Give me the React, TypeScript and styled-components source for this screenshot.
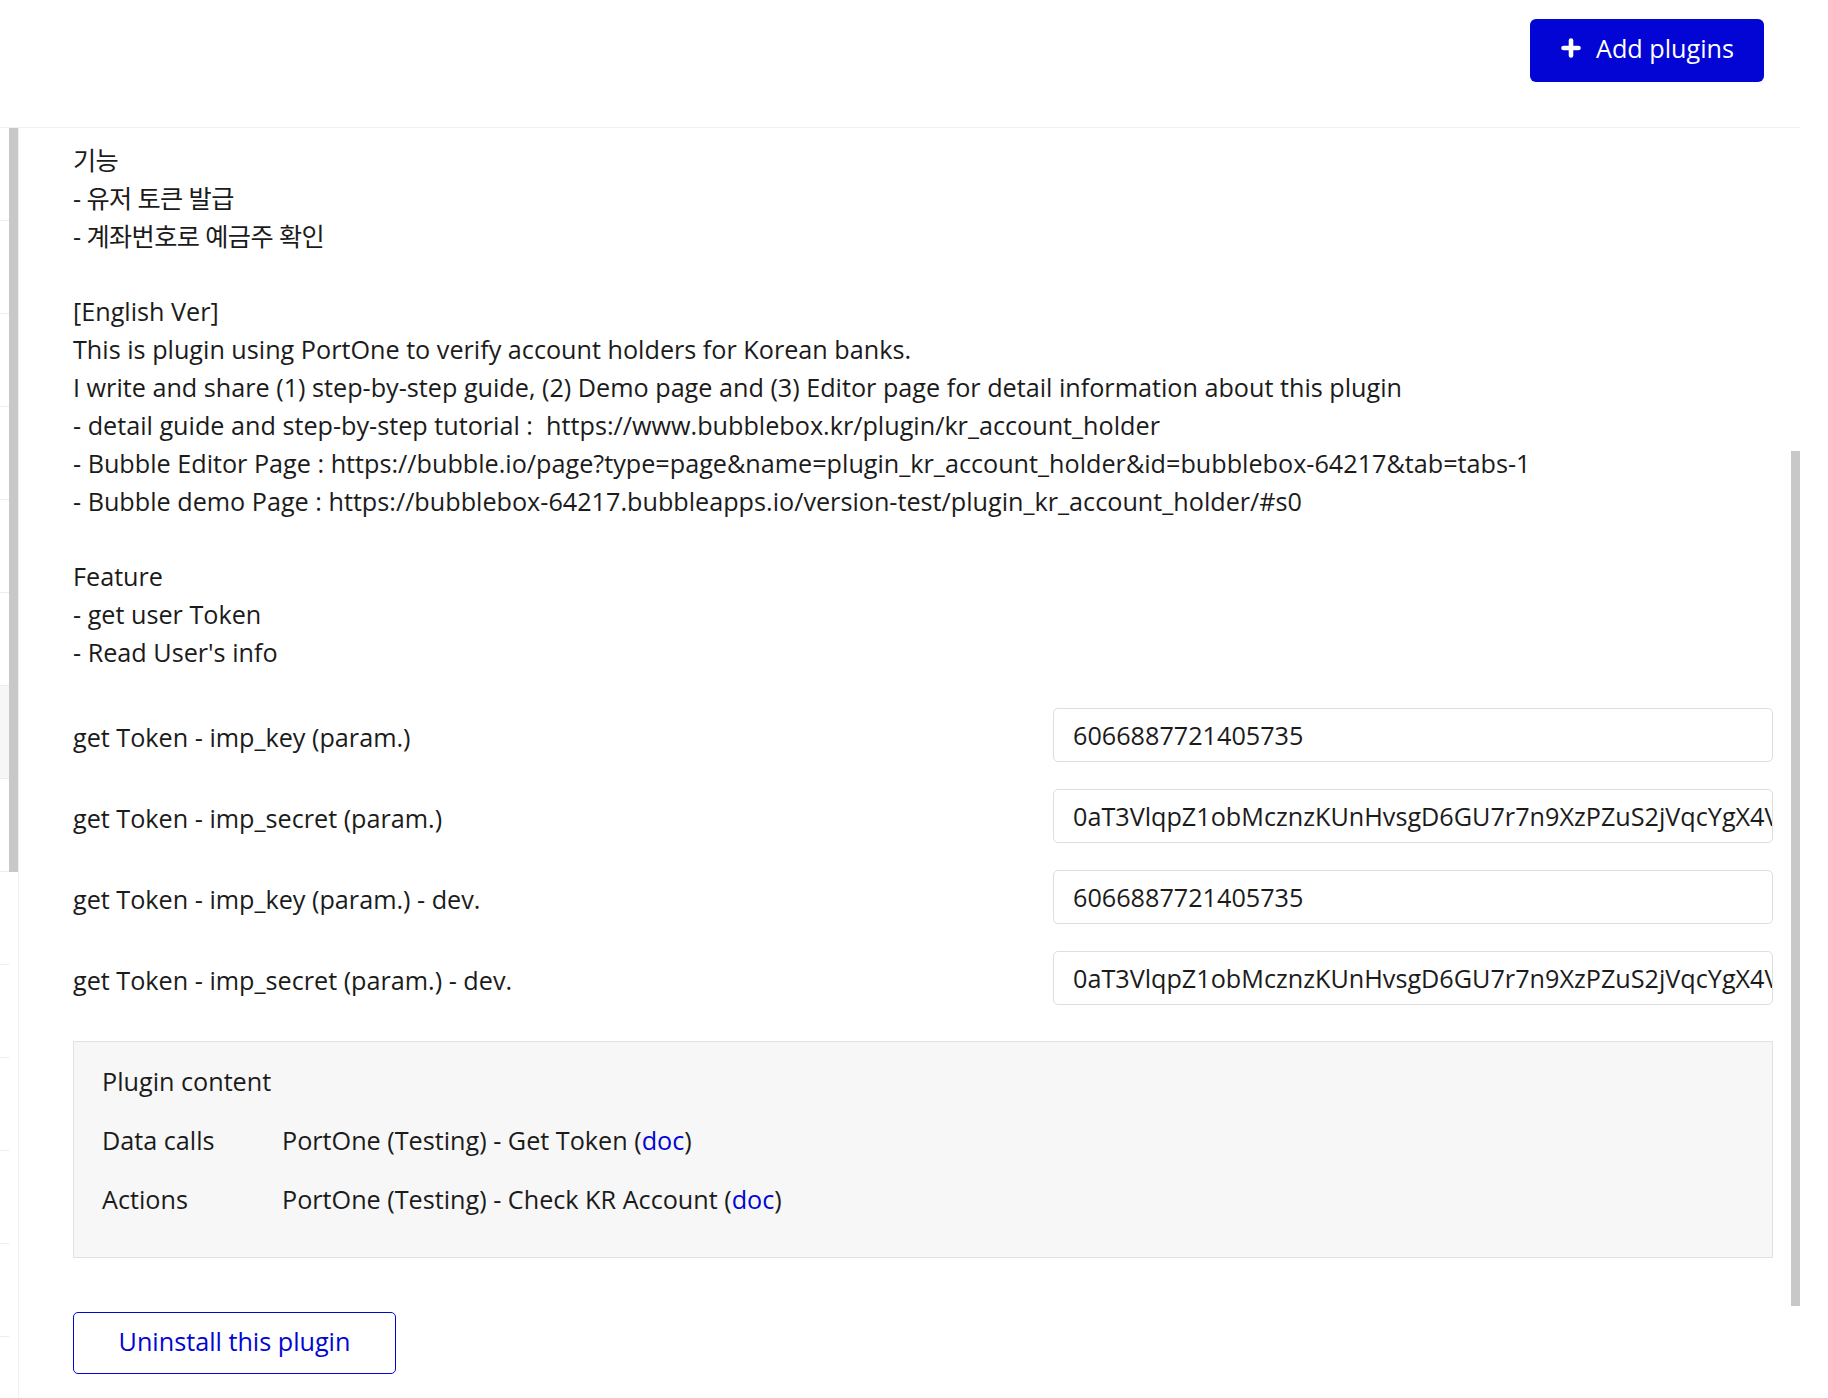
import React from 'react';
import styled, { createGlobalStyle } from 'styled-components';

const GlobalStyle = createGlobalStyle`
  html, body {
    margin: 0;
    padding: 0;
    background: #ffffff;
  }
  body {
    font-family: "Open Sans", "Noto Sans CJK KR", sans-serif;
    color: #1b1b1b;
  }
  * {
    box-sizing: border-box;
  }
`;

const BLUE = '#0205d3';

const Page = styled.div`
  width: 1828px;
  height: 1398px;
  display: flex;
  flex-direction: column;
  overflow: hidden;
  background: #fff;
`;

const Header = styled.header`
  width: 1800px;
  height: 128px;
  flex-shrink: 0;
  display: flex;
  justify-content: flex-end;
  align-items: flex-start;
  padding: 19px 36px 0 0;
  border-bottom: 1px solid #efefef;
`;

const AddButton = styled.button`
  display: flex;
  align-items: center;
  gap: 15px;
  height: 63px;
  width: 234px;
  padding: 0 0 5px 31px;
  border: none;
  border-radius: 6px;
  background: ${BLUE};
  color: #fff;
  font-family: "Open Sans", sans-serif;
  font-size: 25.2px;
  cursor: pointer;
`;

const Body = styled.div`
  flex: 1;
  display: flex;
  min-height: 0;
`;

const ListEdge = styled.div`
  width: 9px;
  display: flex;
  flex-direction: column;
`;

const ListRow = styled.div<{ $active?: boolean }>`
  height: 93px;
  flex-shrink: 0;
  border-bottom: 1px solid #ededed;
  background: ${(p) => (p.$active ? '#f6f6f6' : 'transparent')};
`;

const LeftRail = styled.div`
  width: 10px;
  border-right: 1px solid #f0f0f0;
`;

const Thumb = styled.div<{ $top: number; $height: number }>`
  width: 9px;
  margin-top: ${(p) => p.$top}px;
  height: ${(p) => p.$height}px;
  background: #c8c8c8;
`;

const Panel = styled.main`
  flex: 1;
  padding: 14px 18px 0 54px;
  display: flex;
  flex-direction: column;
`;

const RightRail = styled.div`
  width: 9px;
`;

const RightGutter = styled.div`
  width: 28px;
`;

const Description = styled.div`
  font-size: 25.2px;
  line-height: 37.85px;
  white-space: pre-wrap;
`;

const Korean = styled.span`
  letter-spacing: -0.6px;
`;

const Params = styled.div`
  margin-top: 36px;
  display: grid;
  grid-template-columns: 1fr 720px;
  row-gap: 27px;
  align-items: center;
`;

const ParamLabel = styled.div`
  font-size: 25.2px;
  line-height: 38px;
  padding-top: 4px;
`;

const ParamInput = styled.input`
  height: 54px;
  width: 100%;
  border: 1px solid #dedede;
  border-radius: 5px;
  padding: 0 0 0 19px;
  font-family: "Open Sans", sans-serif;
  font-size: 25.2px;
  color: #1b1b1b;
  background: #fff;
  outline: none;
`;

const ContentBox = styled.section`
  margin-top: 36px;
  background: #f7f7f7;
  border: 1px solid #e2e2e2;
  padding: 20px 28px 39px;
  font-size: 25.2px;
  line-height: 38px;
`;

const ContentRow = styled.div`
  display: flex;
  margin-top: 21px;
`;

const ContentKind = styled.div`
  width: 180px;
  flex-shrink: 0;
`;

const DocLink = styled.a`
  color: ${BLUE};
  text-decoration: none;
`;

const UninstallButton = styled.button`
  margin-top: 54px;
  align-self: flex-start;
  width: 323px;
  height: 62px;
  padding: 0 0 3px;
  border: 1px solid ${BLUE};
  border-radius: 5px;
  background: #fff;
  color: ${BLUE};
  font-family: "Open Sans", sans-serif;
  font-size: 25.2px;
  cursor: pointer;
`;

const PlusIcon = () => (
  <svg width="20" height="20" viewBox="0 0 20 20">
    <path d="M10 2.5v15M2.5 10h15" stroke="#fff" strokeWidth="4.6" strokeLinecap="round" />
  </svg>
);

const koreanLines = ['기능', '- 유저 토큰 발급', '- 계좌번호로 예금주 확인'];

const englishText = `

[English Ver]
This is plugin using PortOne to verify account holders for Korean banks.
I write and share (1) step-by-step guide, (2) Demo page and (3) Editor page for detail information about this plugin
- detail guide and step-by-step tutorial :  https://www.bubblebox.kr/plugin/kr_account_holder
- Bubble Editor Page : https://bubble.io/page?type=page&name=plugin_kr_account_holder&id=bubblebox-64217&tab=tabs-1
- Bubble demo Page : https://bubblebox-64217.bubbleapps.io/version-test/plugin_kr_account_holder/#s0

Feature
- get user Token
- Read User's info`;

const KEY = '6066887721405735';
const SECRET = '0aT3VlqpZ1obMcznzKUnHvsgD6GU7r7n9XzPZuS2jVqcYgX4VwR8mLkE2pTfN5sQbHd3aJy';

const params = [
  { label: 'get Token - imp_key (param.)', value: KEY },
  { label: 'get Token - imp_secret (param.)', value: SECRET },
  { label: 'get Token - imp_key (param.) - dev.', value: KEY },
  { label: 'get Token - imp_secret (param.) - dev.', value: SECRET },
];

const contents = [
  { kind: 'Data calls', name: 'PortOne (Testing) - Get Token' },
  { kind: 'Actions', name: 'PortOne (Testing) - Check KR Account' },
];

const App: React.FC = () => {
  return (
    <Page>
      <GlobalStyle />
      <Header>
        <AddButton>
          <PlusIcon />
          Add plugins
        </AddButton>
      </Header>

      <Body>
        <ListEdge>
          {Array.from({ length: 14 }).map((_, i) => (
            <ListRow key={i} $active={i === 6} />
          ))}
        </ListEdge>
        <LeftRail>
          <Thumb $top={0} $height={744} />
        </LeftRail>

        <Panel>
          <Description>
            <Korean>{koreanLines.join('\n')}</Korean>
            {englishText}
          </Description>

          <Params>
            {params.map((p) => (
              <React.Fragment key={p.label}>
                <ParamLabel>{p.label}</ParamLabel>
                <ParamInput readOnly value={p.value} />
              </React.Fragment>
            ))}
          </Params>

          <ContentBox>
            <div>Plugin content</div>
            {contents.map((c) => (
              <ContentRow key={c.kind}>
                <ContentKind>{c.kind}</ContentKind>
                <div>
                  {c.name} (<DocLink href="#">doc</DocLink>)
                </div>
              </ContentRow>
            ))}
          </ContentBox>

          <UninstallButton>Uninstall this plugin</UninstallButton>
        </Panel>

        <RightRail>
          <Thumb $top={323} $height={855} />
        </RightRail>
        <RightGutter />
      </Body>
    </Page>
  );
};

export default App;
